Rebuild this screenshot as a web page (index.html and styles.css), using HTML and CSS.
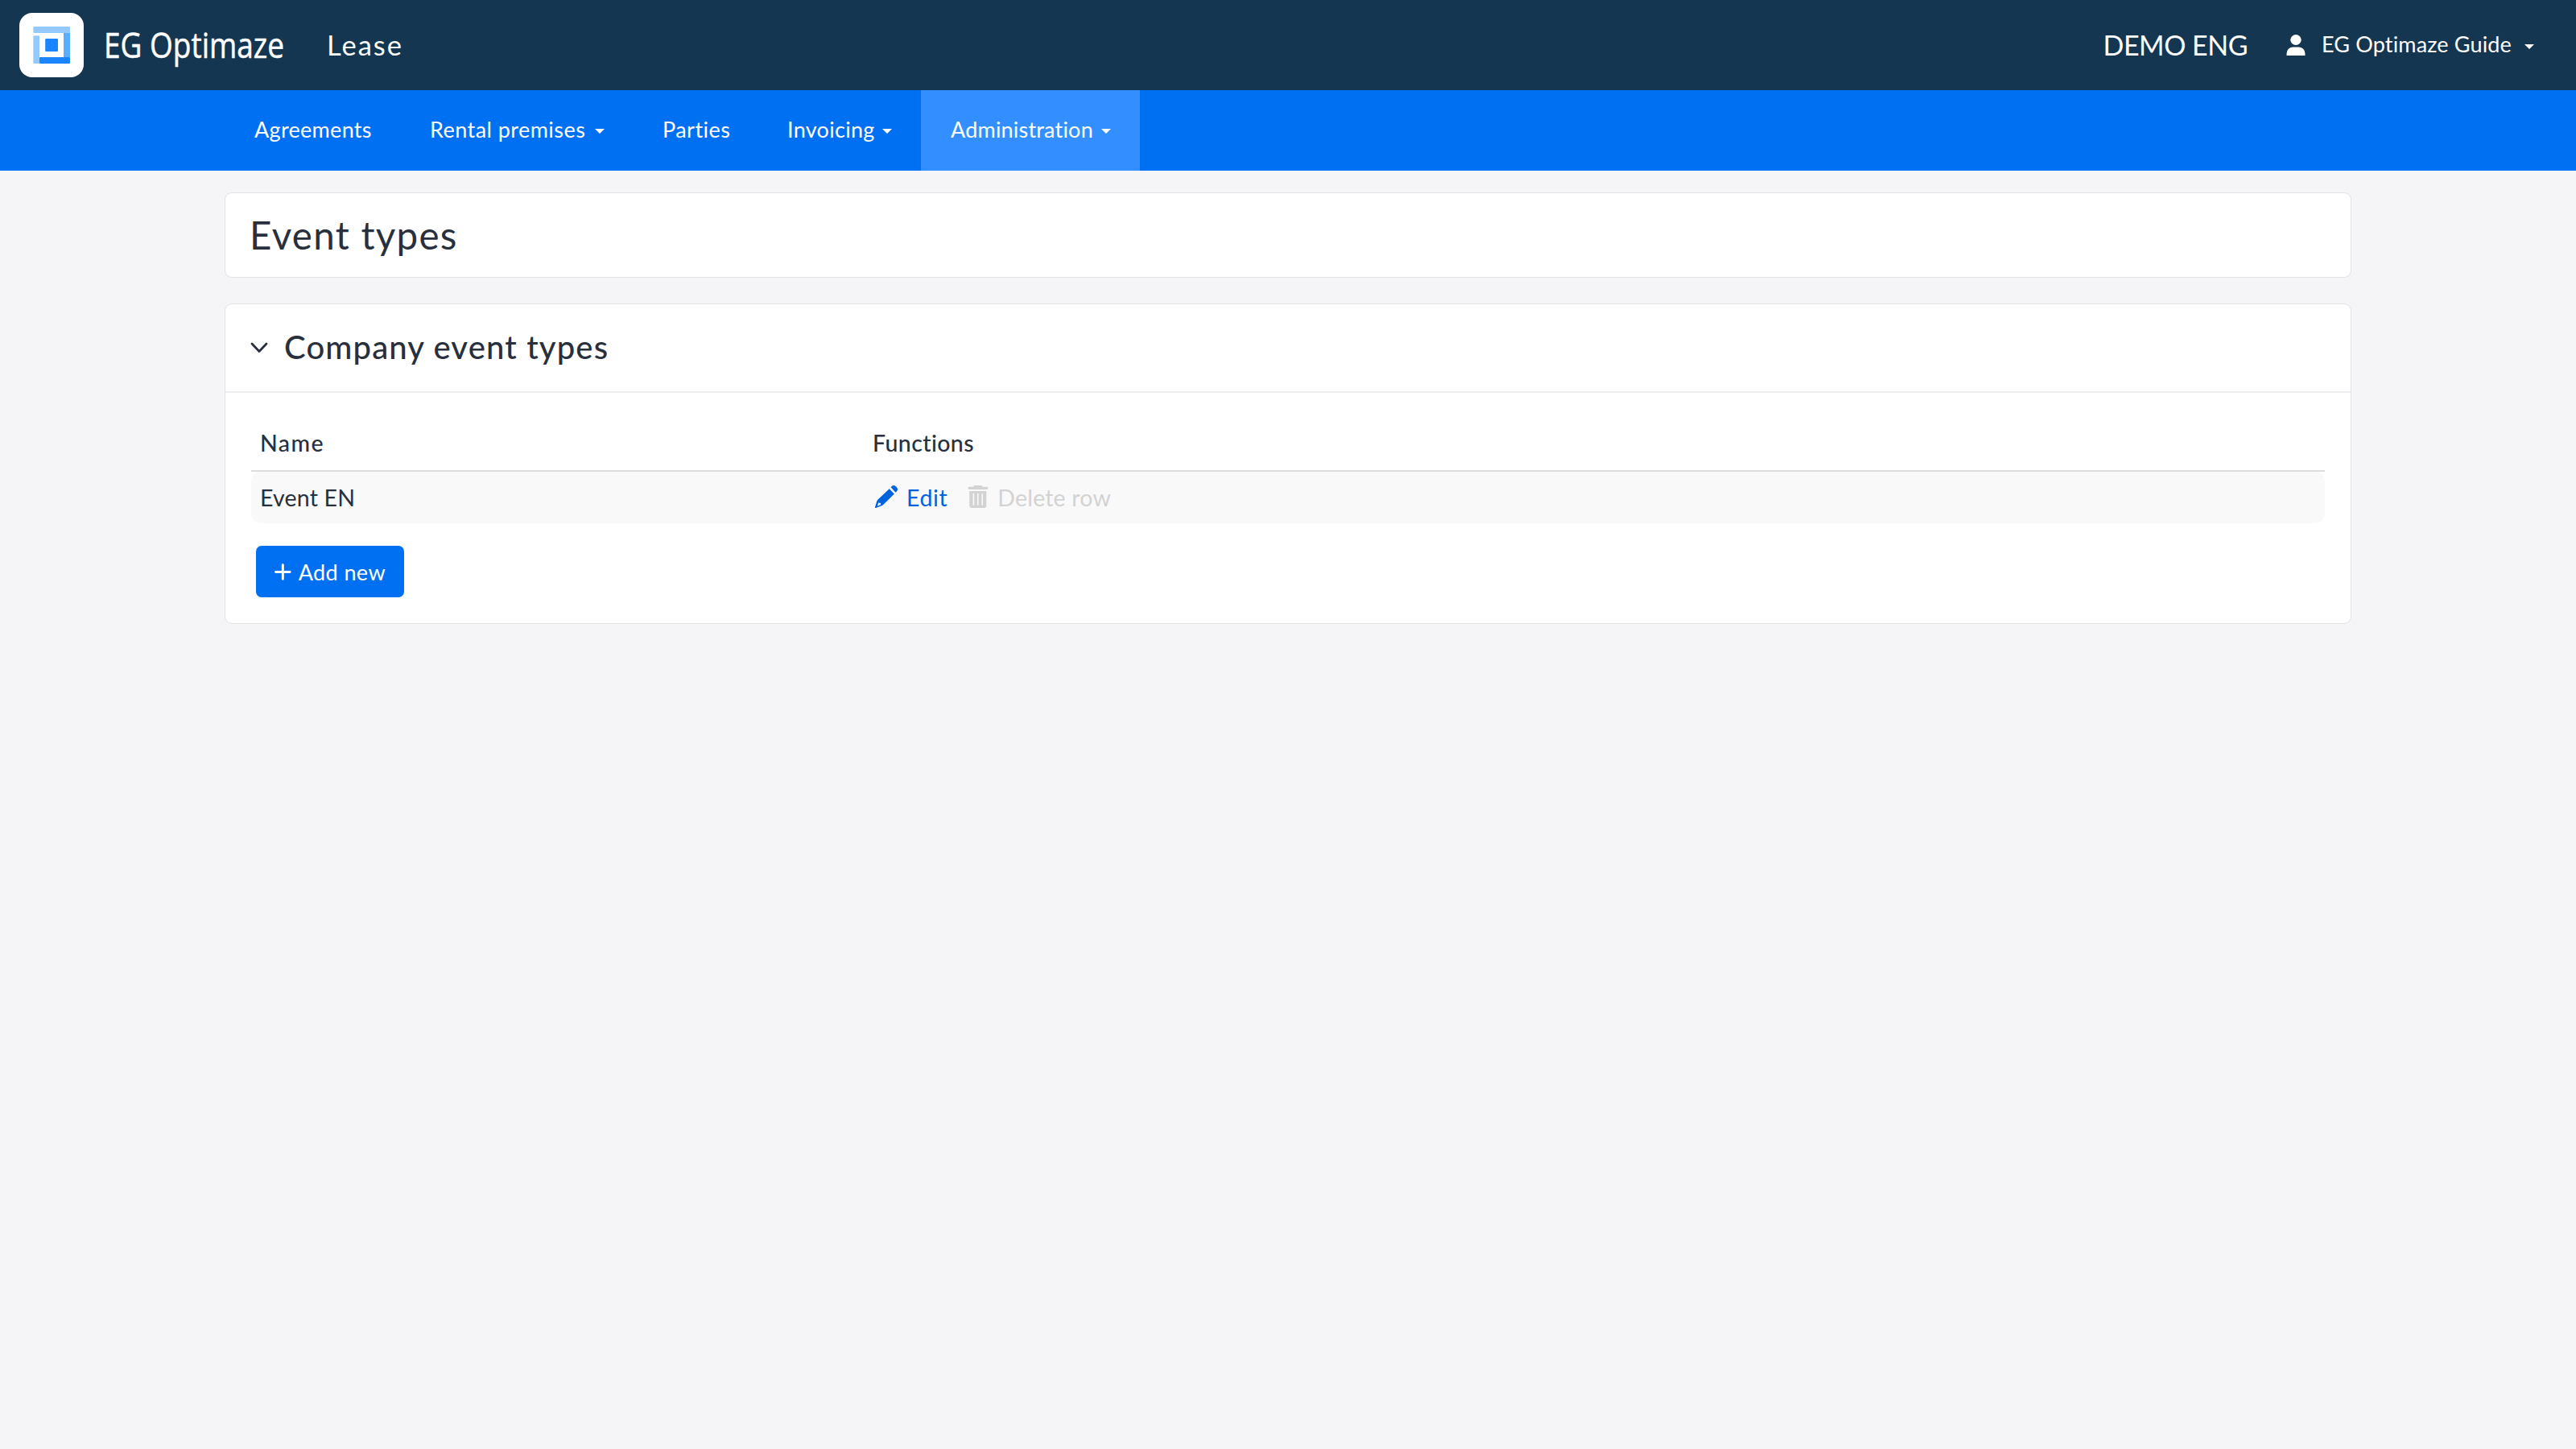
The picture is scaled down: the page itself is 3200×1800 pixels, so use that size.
FILE: index.html
```html
<!DOCTYPE html>
<html lang="en">
<head>
  <meta charset="UTF-8">
  <meta name="viewport" content="width=device-width, initial-scale=1.0">
  <title>EG Optimaze - Event types</title>
  <link rel="stylesheet" href="styles.css">
</head>
<body>

  <header class="top-bar">
    <a class="logo" href="#">
      <svg width="80" height="80" viewBox="0 0 80 80">
        <rect width="80" height="80" rx="16" fill="#fff"/>
        <rect x="17.3" y="17" width="45.7" height="8" rx="1" fill="#94caff"/>
        <rect x="17.3" y="28.3" width="7.7" height="34.7" rx="1" fill="#94caff"/>
        <rect x="55" y="25" width="8" height="30" fill="#5aaeff"/>
        <rect x="25" y="55" width="38" height="8" rx="1" fill="#1a85ff"/>
        <rect x="32.2" y="32" width="15.8" height="16" rx="1" fill="#1a85ff"/>
      </svg>
      <svg class="logo-name" width="230" height="80" viewBox="0 0 230 80">
        <text x="2" y="55.5" textLength="224" lengthAdjust="spacingAndGlyphs">EG Optimaze</text>
      </svg>
    </a>
    <span class="module">Lease</span>
    <span class="company">DEMO ENG</span>
    <a class="user" href="#">
      <svg width="24" height="26" viewBox="0 0 24 26" fill="#fff">
        <ellipse cx="12" cy="6.5" rx="6.7" ry="6.5"/>
        <path d="M0.500 26v-2.500a8 8 0 0 1 8-8h7a8 8 0 0 1 8 8v2.500z"/>
      </svg>
      <span class="user-name">EG Optimaze Guide</span>
      <i class="caret"></i>
    </a>
  </header>

  <nav class="main-nav">
    <a href="#">Agreements</a>
    <a class="wide" href="#">Rental premises <i class="caret"></i></a>
    <a class="wide" href="#">Parties</a>
    <a href="#">Invoicing <i class="caret"></i></a>
    <a class="active" href="#">Administration <i class="caret"></i></a>
  </nav>

  <main class="container">
    <div class="card page-title">
      <h1>Event types</h1>
    </div>

    <div class="card">
      <div class="card-header">
        <svg width="22" height="14" viewBox="0 0 22 14" fill="none" stroke="#29303d" stroke-width="2.800" stroke-linecap="round" stroke-linejoin="round">
          <path d="M2 2l9 9.500 9-9.500"/>
        </svg>
        <h2>Company event types</h2>
      </div>
      <div class="card-body">
        <div class="row head">
          <span class="th-name">Name</span>
          <span>Functions</span>
        </div>
        <div class="row item">
          <span>Event EN</span>
          <div class="functions">
            <a class="edit" href="#">
              <svg width="28" height="28" viewBox="0 0 28 28" fill="#0062dd">
                <path d="M19.600 2.300l1-1a3.700 3.700 0 0 1 5.200 0l1 1a3.700 3.700 0 0 1 0 5.200l-1.300 1.300z"/>
                <path fill-rule="evenodd" d="M17.700 4.200l6.200 6.200L10.200 24a5 5 0 0 1-2.100 1.200L0.900 28a.7.7 0 0 1-.9-.9l2.200-7.300a5 5 0 0 1 1.200-2zM4.300 21.300l-1.400 4.200 4.100-1.500.2-2.100-1.900-.1z"/>
              </svg>
              Edit
            </a>
            <span class="delete">
              <svg width="26" height="28" viewBox="0 0 26 28" fill="#d3d3d3">
                <path d="M8.200 0h9.100l1.400 1.700h5.200a1.600 1.600 0 0 1 0 3.300H2.100a1.600 1.600 0 0 1 0-3.300h4.800z"/>
                <path fill-rule="evenodd" d="M2.200 7h21.100v18a3 3 0 0 1-3 3H5.200a3 3 0 0 1-3-3zM6.600 10.500v13.600a.8.8 0 0 0 1.600 0V10.500a.8.8 0 0 0-1.600 0zM12 10.500v13.600a.8.8 0 0 0 1.600 0V10.500a.8.8 0 0 0-1.600 0zM17.400 10.500v13.600a.8.8 0 0 0 1.600 0V10.500a.8.8 0 0 0-1.600 0z"/>
              </svg>
              Delete row
            </span>
          </div>
        </div>
        <button class="add-btn">
          <svg width="21" height="21" viewBox="0 0 21 21" stroke="#fff" stroke-width="3" stroke-linecap="round">
            <path d="M10.500 1.500v18M1.500 10.500h18"/>
          </svg>
          Add new
        </button>
      </div>
    </div>
  </main>

</body>
</html>
```
FILE: styles.css
```css
* {
  box-sizing: border-box;
}

body {
  margin: 0;
  min-height: 1800px;
  font-family: Lato, "Open Sans", sans-serif;
  font-size: 28.5px;
  background: #f5f5f8;
  color: #29303d;
}

a {
  color: inherit;
  text-decoration: none;
}

h1,
h2 {
  margin: 0;
}

.top-bar {
  display: flex;
  align-items: center;
  height: 112px;
  padding: 0 52px 0 24px;
  background: #153650;
  color: #fff;
}

.logo {
  display: flex;
  align-items: center;
}

.logo-name {
  margin-left: 23px;
  overflow: visible;
  fill: #fff;
  stroke: #fff;
  stroke-width: 0.5px;
  font-family: "Open Sans", sans-serif;
  font-size: 43px;
  font-weight: 500;
}

.module {
  margin-left: 49px;
  padding-bottom: 2px;
  font-size: 34.5px;
  letter-spacing: 2px;
}

.company {
  margin-left: auto;
  padding-bottom: 2px;
  font-size: 34px;
  letter-spacing: -0.5px;
}

.user {
  display: flex;
  align-items: center;
  width: 308px;
  margin-left: 48px;
  font-size: 27px;
  letter-spacing: 0.15px;
}

.user-name {
  margin: 0 auto 0 20px;
  padding-bottom: 3px;
}

.caret {
  flex: none;
  margin-top: 3px;
  border: 6px solid transparent;
  border-top-color: currentColor;
  border-bottom: 0;
}

.main-nav {
  display: grid;
  grid-template-columns: 219px 289px 154px 202px 272px;
  height: 100px;
  padding-left: 280px;
  background: #0070f2;
  color: #fff;
  font-size: 27px;
  letter-spacing: 0.3px;
}

.main-nav a {
  display: flex;
  align-items: center;
  justify-content: space-between;
  padding: 0 36px 3px;
  white-space: nowrap;
}

.main-nav .wide {
  padding-left: 35px;
  padding-right: 37px;
  letter-spacing: 0.45px;
}

.main-nav .caret {
  margin-top: 5px;
}

.main-nav .active {
  padding-left: 37px;
  background: #338fff;
  letter-spacing: 0.2px;
}

.container {
  width: 2640px;
  margin: 28px auto 0;
}

.card {
  margin-bottom: 34px;
  background: #fff;
  border-radius: 8px;
  box-shadow: 0 0 0 1px #e2e2e5;
}

.page-title {
  height: 104px;
  padding: 24px 30px;
}

h1 {
  font-size: 47.5px;
  font-weight: 400;
  line-height: 56px;
  letter-spacing: 1.3px;
}

.card-header {
  display: flex;
  align-items: center;
  height: 110px;
  padding-left: 31px;
  border-bottom: 2px solid #eee;
}

h2 {
  margin-left: 20px;
  padding-bottom: 2px;
  font-size: 40px;
  font-weight: 500;
  letter-spacing: 1.15px;
}

.card-body {
  height: 286px;
  padding: 32px;
}

.row {
  display: grid;
  grid-template-columns: 761px 1fr;
  align-items: center;
  height: 64px;
  padding: 0 11px 1px;
}

.head {
  height: 66px;
  padding-bottom: 5px;
  border-bottom: 2px solid #ddd;
  font-weight: 500;
  letter-spacing: 0.4px;
}

.th-name {
  letter-spacing: 1.4px;
}

.item {
  background: #f9f9f9;
  border-radius: 12px;
  letter-spacing: 0.2px;
}

.functions,
.edit,
.delete {
  display: flex;
  align-items: center;
}

.functions svg {
  margin-bottom: 2px;
}

.edit {
  margin-left: 3px;
  gap: 11px;
  color: #0062dd;
  letter-spacing: 0.6px;
}

.delete {
  margin-left: 25px;
  gap: 11px;
  color: #d3d3d3;
  letter-spacing: 0.2px;
}

.add-btn {
  display: flex;
  align-items: center;
  gap: 9px;
  width: 184px;
  height: 64px;
  margin: 28px 0 0 6px;
  padding: 0 23px;
  border: 0;
  border-radius: 7px;
  background: #0070f2;
  color: #fff;
  font: inherit;
  font-size: 27px;
  letter-spacing: 0.4px;
  white-space: nowrap;
}
```
